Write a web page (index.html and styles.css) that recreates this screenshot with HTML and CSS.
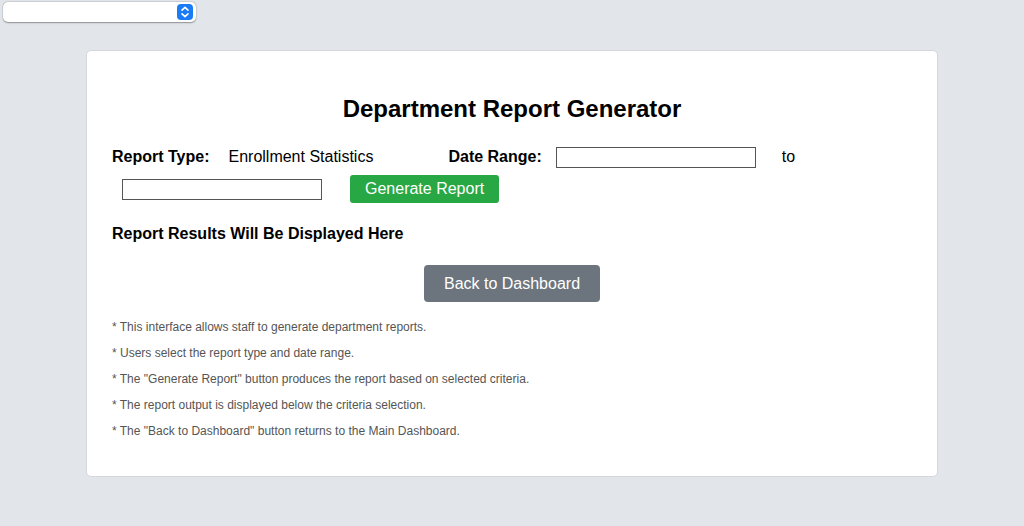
FILE: index.html
```html
<!DOCTYPE html>
<html lang="en">
<head>
<meta charset="utf-8">
<title>Department Report Generator</title>
<link rel="stylesheet" href="styles.css">
</head>
<body>
<div class="topbar">
  <div class="select" role="combobox" aria-label="Navigation">
    <span class="select-arrows">
      <svg width="16" height="16" viewBox="0 0 16 16" aria-hidden="true">
        <path d="M5 6.2 L8 3.4 L11 6.2" fill="none" stroke="#fff" stroke-width="1.6" stroke-linecap="round" stroke-linejoin="round"/>
        <path d="M5 9.8 L8 12.6 L11 9.8" fill="none" stroke="#fff" stroke-width="1.6" stroke-linecap="round" stroke-linejoin="round"/>
      </svg>
    </span>
  </div>
</div>
<main class="card">
  <h1 class="title">Department Report Generator</h1>
  <div class="criteria">
    <span class="label label-type">Report Type:</span>
    <span class="value">Enrollment Statistics</span>
    <span class="label label-date">Date Range:</span>
    <input class="date-input date-from" type="text" aria-label="Start date">
    <span class="to">to</span>
    <input class="date-input date-to" type="text" aria-label="End date">
    <button class="btn btn-generate" type="button">Generate Report</button>
  </div>
  <h2 class="results">Report Results Will Be Displayed Here</h2>
  <div class="actions">
    <button class="btn btn-back" type="button">Back to Dashboard</button>
  </div>
  <div class="notes">
    <p>* This interface allows staff to generate department reports.</p>
    <p>* Users select the report type and date range.</p>
    <p>* The "Generate Report" button produces the report based on selected criteria.</p>
    <p>* The report output is displayed below the criteria selection.</p>
    <p>* The "Back to Dashboard" button returns to the Main Dashboard.</p>
  </div>
</main>
</body>
</html>
```

FILE: styles.css
```css
html, body {
  margin: 0;
  padding: 0;
}

body {
  background: #e2e5ea;
  font-family: "Liberation Sans", Arial, sans-serif;
  color: #000;
  min-height: 526px;
}

.topbar {
  padding: 2px 0 0 3px;
  height: 20px;
}

.select {
  width: 193px;
  height: 20px;
  box-sizing: border-box;
  background: #fff;
  border-radius: 5px;
  box-shadow: 0 0.5px 1.5px rgba(0, 0, 0, 0.35), 0 0 0 0.5px rgba(0, 0, 0, 0.08);
  display: flex;
  align-items: center;
  justify-content: flex-end;
  padding-right: 3px;
}

.select-arrows {
  width: 16px;
  height: 16px;
  border-radius: 4px;
  background: #1a7cf5;
  display: flex;
}

.card {
  display: block;
  width: 800px;
  margin: 28px auto 0;
  padding: 25px;
  background: #fff;
  border: 1px solid #d3d6db;
  border-radius: 5px;
}

.title {
  margin: 19px 0 25px;
  font-size: 24px;
  font-weight: bold;
  text-align: center;
  line-height: 27px;
}

.criteria {
  display: flex;
  flex-wrap: wrap;
  align-items: center;
  row-gap: 7px;
  font-size: 16px;
  line-height: 18px;
}

.criteria > span {
  padding-bottom: 2px;
}

.label {
  font-weight: bold;
}

.label-type {
  margin-right: 19px;
}

.value {
  margin-right: 75px;
}

.label-date {
  margin-right: 14px;
}

.date-input {
  width: 200px;
  height: 21px;
  box-sizing: border-box;
  border: 1px solid #555;
  border-radius: 0;
  padding: 0 4px;
  margin: 0;
  font: inherit;
  background: #fff;
}

.date-from {
  margin-right: 26px;
}

.date-to {
  margin-left: 10px;
  margin-right: 28px;
}

.btn {
  font-family: "Liberation Sans", Arial, sans-serif;
  font-size: 16px;
  color: #fff;
  border: none;
  cursor: pointer;
}

.btn-generate {
  background: #28a745;
  height: 28px;
  padding: 0 15px;
  border-radius: 3px;
  line-height: 28px;
}

.results {
  margin: 21px 0 0;
  font-size: 16px;
  font-weight: bold;
  line-height: 19px;
}

.actions {
  display: flex;
  justify-content: center;
  margin-top: 22px;
}

.btn-back {
  background: #6c757d;
  height: 37px;
  padding: 0 19.5px;
  border-radius: 4px;
  line-height: 37px;
}

.notes {
  margin-top: 18px;
  margin-bottom: 13px;
  font-size: 12px;
  color: #555;
}

.notes p {
  margin: 0 0 12px;
  line-height: 14px;
}

.notes p:last-child {
  margin-bottom: 0;
}
```
